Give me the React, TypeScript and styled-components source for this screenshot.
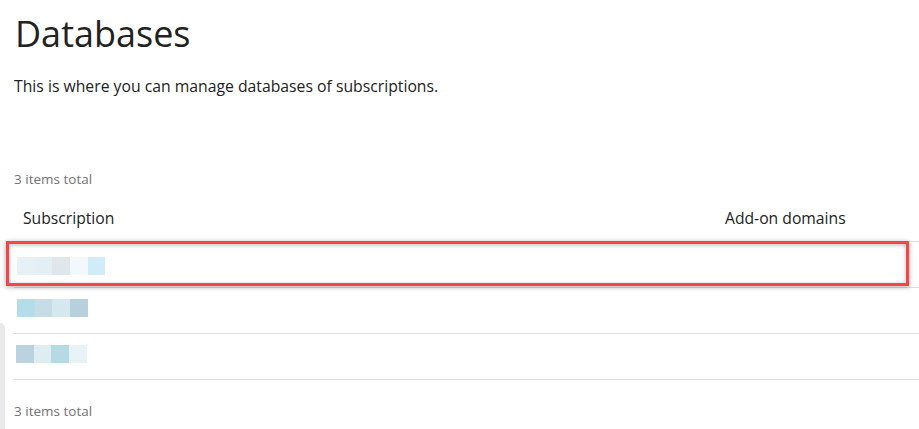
import React from "react";
import styled, { createGlobalStyle } from "styled-components";

const Global = createGlobalStyle`
  html, body { margin: 0; padding: 0; background: #fff; }
  body { font-family: "Open Sans", "Noto Sans", Arial, sans-serif; color: #222; overflow: hidden; }
`;

const Page = styled.div`
  padding: 12px 0 0 14px;
  width: 919px;
  height: 429px;
  box-sizing: border-box;
  overflow: hidden;
  position: relative;
`;

const Title = styled.h1`
  margin: 0 0 0 1px;
  font-size: 36px;
  line-height: 43px;
  font-weight: 400;
  color: #222;
`;

const Lead = styled.p`
  margin: 20px 0 0;
  font-size: 15.75px;
  line-height: 22px;
  color: #222;
`;

const Total = styled.div<{ $top: number }>`
  margin-top: ${(p) => p.$top}px;
  font-size: 13.5px;
  line-height: 18px;
  color: #737373;
`;

const Table = styled.div`
  margin-top: 12px;
  position: relative;
  width: 100%;
`;

const HeaderRow = styled.div`
  display: grid;
  grid-template-columns: 702px 1fr;
  border-bottom: 1px solid #e0e0e0;
  height: 42px;
  box-sizing: border-box;
`;

const HeaderCell = styled.div`
  padding: 6px 9px 0;
  font-size: 15.7px;
  line-height: 24px;
  color: #222;
`;

const Row = styled.div`
  position: relative;
  display: grid;
  grid-template-columns: 702px 1fr;
  height: 46px;
  box-sizing: border-box;
  border-bottom: 1px solid #dedede;
`;

const Cell = styled.div<{ $pt: number; $pl: number }>`
  padding: ${(p) => p.$pt}px 0 0 ${(p) => p.$pl}px;
`;

const Blur = styled.div`
  display: flex;
  height: 18px;
`;

const Pixel = styled.span<{ $c: string; $w: number }>`
  display: block;
  width: ${(p) => p.$w}px;
  height: 18px;
  background: ${(p) => p.$c};
`;

const Highlight = styled.div`
  position: absolute;
  left: -8px;
  top: -1px;
  width: 903px;
  height: 45px;
  box-sizing: border-box;
  border: 3px solid #f64545;
  box-shadow: 0 1px 5px rgba(0, 0, 0, 0.35), inset 0 1px 4px rgba(0, 0, 0, 0.28);
  pointer-events: none;
`;

const SideTab = styled.div`
  position: absolute;
  left: 0;
  top: 323px;
  width: 5px;
  height: 120px;
  background: #e9e9e9;
  border-radius: 0 5px 0 0;
`;

const rows = [
  { pt: 15, pl: 3, colors: ["#e6f0f5", "#e3eef5", "#e1e6ea", "#f2f8fb", "#d0ecf8"], w: [18, 17, 18, 18, 17] },
  { pt: 11, pl: 3, colors: ["#b3dde9", "#c6dde8", "#d5e8ef", "#b8d0dc"], w: [18, 17, 18, 18] },
  { pt: 11, pl: 2, colors: ["#bad3df", "#dfecf2", "#b6dae4", "#e8f3f7"], w: [18, 17, 18, 18] },
];

export default function App() {
  return (
    <>
      <Global />
      <Page>
        <Title>Databases</Title>
        <Lead>This is where you can manage databases of subscriptions.</Lead>
        <Total $top={73}>3 items total</Total>
        <Table>
          <HeaderRow>
            <HeaderCell>Subscription</HeaderCell>
            <HeaderCell>Add-on domains</HeaderCell>
          </HeaderRow>
          {rows.map((r, i) => (
            <Row key={i}>
              <Cell $pt={r.pt} $pl={r.pl}>
                <Blur>
                  {r.colors.map((c, j) => (
                    <Pixel key={j} $c={c} $w={r.w[j]} />
                  ))}
                </Blur>
              </Cell>
              <Cell $pt={0} $pl={0} />
              {i === 0 && <Highlight />}
            </Row>
          ))}
        </Table>
        <Total $top={22}>3 items total</Total>
        <SideTab />
      </Page>
    </>
  );
}
